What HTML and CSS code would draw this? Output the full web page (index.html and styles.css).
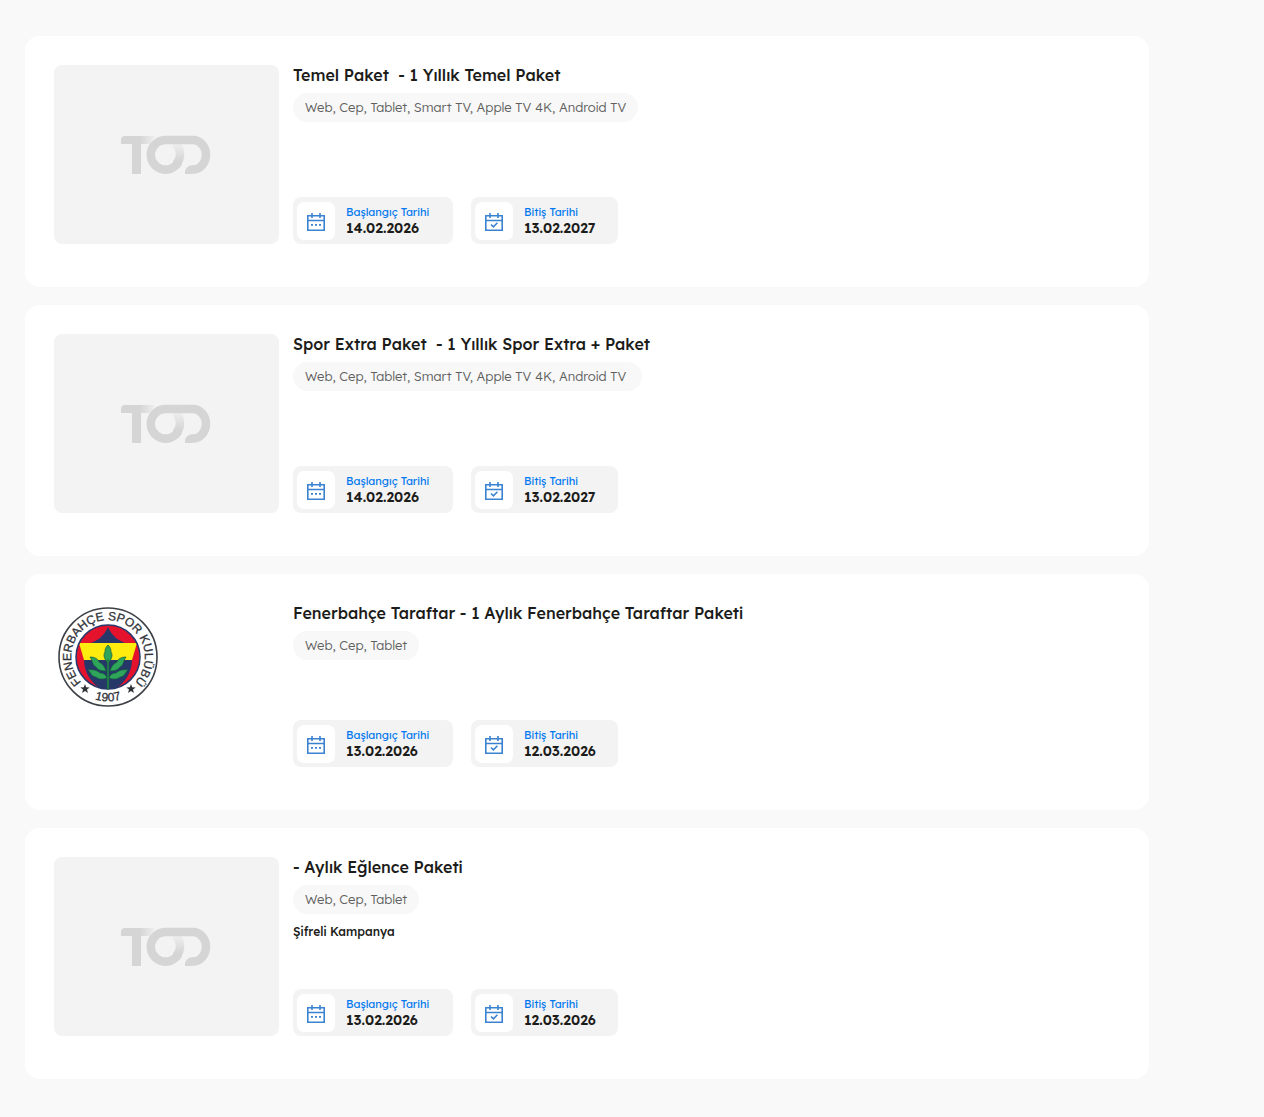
FILE: index.html
```html
<!DOCTYPE html>
<html lang="tr">
<head>
<meta charset="utf-8">
<meta name="viewport" content="width=device-width, initial-scale=1">
<title>Paketlerim</title>
<link rel="stylesheet" href="styles.css">
</head>
<body>
<svg class="sprite" aria-hidden="true">
  <defs>
    <linearGradient id="fade-t" x1="0" x2="1" y1="0" y2="0">
      <stop offset="0" stop-color="#d6d5d5"/><stop offset=".55" stop-color="#d6d5d5"/><stop offset="1" stop-color="#eeeeee"/>
    </linearGradient>
    <linearGradient id="fade-o" gradientUnits="userSpaceOnUse" x1="0" x2="0" y1="8" y2="26">
      <stop offset="0" stop-color="#efefef"/><stop offset="1" stop-color="#d6d5d5"/>
    </linearGradient>
    <symbol id="tod" viewBox="0 0 92 39">
      <path d="M0 9V5a4 4 0 0 1 4-4h30l-5 8z" fill="url(#fade-t)"/>
      <path d="M11 8h9v31h-9z" fill="#d6d5d5"/>
      <path d="M54 8c3.500 3 5 7 5 11.500a15 15 0 0 1-4 10" fill="none" stroke="url(#fade-o)" stroke-width="8.500"/>
      <path d="M71 5H45a14.800 14.800 0 1 0 12.500 22" fill="none" stroke="#d6d5d5" stroke-width="8.500"/>
      <path d="M70 5h2a13 14.800 0 0 1 0 29.600h-1" fill="none" stroke="#d6d5d5" stroke-width="8.500"/>
      <path d="M71.500 30.300V39H64v-1.500a7.200 7.200 0 0 1 7.500-7.200z" fill="#d6d5d5"/>
    </symbol>
    <symbol id="cal-start" viewBox="0 0 20 20">
      <path d="M1.800 4.800h16.400v14.400H1.800zM1.800 9.500h16.400M6 2v5M14 2v5" fill="none" stroke="#3b82d0" stroke-width="1.600"/>
      <path d="M5 13.800h2M9 13.800h2M13 13.800h2" stroke="#3b82d0" stroke-width="1.800"/>
    </symbol>
    <symbol id="cal-end" viewBox="0 0 20 20">
      <path d="M1.800 4.800h16.400v14.400H1.800zM1.800 9.500h16.400M6 2v5M14 2v5M7 13.500l2.400 2.300 4-4" fill="none" stroke="#3b82d0" stroke-width="1.600"/>
    </symbol>
  </defs>
</svg>

<main class="packages">
  <article class="card">
    <div class="thumb"><svg class="tod" role="img" aria-label="TOD"><use href="#tod"/></svg></div>
    <div class="info">
      <h2 class="title">Temel Paket&nbsp; - 1 Yıllık Temel Paket</h2>
      <p class="devices">Web, Cep, Tablet, Smart TV, Apple TV 4K, Android TV</p>
      <dl class="dates">
        <div class="date date-start"><span class="date-icon"><svg><use href="#cal-start"/></svg></span><div><dt>Başlangıç Tarihi</dt><dd>14.02.2026</dd></div></div>
        <div class="date date-end"><span class="date-icon"><svg><use href="#cal-end"/></svg></span><div><dt>Bitiş Tarihi</dt><dd>13.02.2027</dd></div></div>
      </dl>
    </div>
  </article>

  <article class="card">
    <div class="thumb"><svg class="tod" role="img" aria-label="TOD"><use href="#tod"/></svg></div>
    <div class="info">
      <h2 class="title">Spor Extra Paket&nbsp; - 1 Yıllık Spor Extra + Paket</h2>
      <p class="devices">Web, Cep, Tablet, Smart TV, Apple TV 4K, Android TV&nbsp;</p>
      <dl class="dates">
        <div class="date date-start"><span class="date-icon"><svg><use href="#cal-start"/></svg></span><div><dt>Başlangıç Tarihi</dt><dd>14.02.2026</dd></div></div>
        <div class="date date-end"><span class="date-icon"><svg><use href="#cal-end"/></svg></span><div><dt>Bitiş Tarihi</dt><dd>13.02.2027</dd></div></div>
      </dl>
    </div>
  </article>

  <article class="card">
    <div class="club">
      <svg class="crest" viewBox="0 0 108 108" role="img" aria-label="Fenerbahçe Spor Kulübü">
        <defs>
          <clipPath id="disc"><circle cx="54" cy="54" r="32"/></clipPath>
          <path id="arc-top" d="M27.500 79.500A36.800 36.800 0 1 1 80.500 79.500"/>
          <path id="arc-year" d="M32 92.500A44.500 44.500 0 0 0 76 92.500"/>
        </defs>
        <circle cx="54" cy="54" r="49" fill="#fff" stroke="#3c3f45" stroke-width="1.600"/>
        <circle cx="54" cy="54" r="32" fill="#e5122d"/>
        <g clip-path="url(#disc)">
          <path d="M33 41c10-2 17-8 21-17 4 9 11 15 21 17z" fill="#26376a"/>
          <path d="M30 56h48c0 17-10 27-24 34-14-7-24-17-24-34z" fill="#26376a"/>
          <path d="M25 40h58l-5 17H30z" fill="#ffec0f"/>
        </g>
        <circle cx="54" cy="54" r="32" fill="none" stroke="#26376a" stroke-width="1.500"/>
        <g fill="#2fa55c" stroke="#145f38" stroke-width=".7">
          <path d="M54 42c3 3 3 5 3 7 2 3 1 7-3 11-4-4-5-8-3-11 0-2 0-4 3-7z"/>
          <path d="M36 54c5 0 8 2 9 5 4 2 6 5 7 9-5 0-8-1-10-4-4-2-3-6-6-10zM72 54c-5 0-8 2-9 5-4 2-6 5-7 9 5 0 8-1 10-4 4-2 3-6 6-10z"/>
          <path d="M34 67c6-1 10 1 12 3 4 0 6 2 7 5-5 2-9 1-11-1-4 0-5-4-8-7zM74 67c-6-1-10 1-12 3-4 0-6 2-7 5 5 2 9 1 11-1 4 0 5-4 8-7z"/>
          <path d="M53.200 57h1.600v29h-1.600z"/>
        </g>
        <g fill="#303338">
          <path id="star" d="M31 81l1.200 3.300 3.500.1-2.700 2.200.9 3.400-2.900-2-2.900 2 .9-3.400-2.700-2.200 3.500-.1z"/>
          <use href="#star" x="46"/>
        </g>
        <text class="crest-text" text-anchor="middle"><textPath href="#arc-top" startOffset="50%">FENERBAHÇE SPOR KULÜBÜ</textPath></text>
        <text class="crest-text" text-anchor="middle"><textPath href="#arc-year" startOffset="50%">1907</textPath></text>
      </svg>
    </div>
    <div class="info">
      <h2 class="title">Fenerbahçe Taraftar - 1 Aylık Fenerbahçe Taraftar Paketi</h2>
      <p class="devices">Web, Cep, Tablet</p>
      <dl class="dates">
        <div class="date date-start"><span class="date-icon"><svg><use href="#cal-start"/></svg></span><div><dt>Başlangıç Tarihi</dt><dd>13.02.2026</dd></div></div>
        <div class="date date-end"><span class="date-icon"><svg><use href="#cal-end"/></svg></span><div><dt>Bitiş Tarihi</dt><dd>12.03.2026</dd></div></div>
      </dl>
    </div>
  </article>

  <article class="card">
    <div class="thumb"><svg class="tod" role="img" aria-label="TOD"><use href="#tod"/></svg></div>
    <div class="info">
      <h2 class="title">- Aylık Eğlence Paketi</h2>
      <p class="devices">Web, Cep, Tablet</p>
      <p class="campaign">Şifreli Kampanya</p>
      <dl class="dates">
        <div class="date date-start"><span class="date-icon"><svg><use href="#cal-start"/></svg></span><div><dt>Başlangıç Tarihi</dt><dd>13.02.2026</dd></div></div>
        <div class="date date-end"><span class="date-icon"><svg><use href="#cal-end"/></svg></span><div><dt>Bitiş Tarihi</dt><dd>12.03.2026</dd></div></div>
      </dl>
    </div>
  </article>
</main>
</body>
</html>
```
FILE: styles.css
```css
* {
  box-sizing: border-box;
}

body {
  margin: 0;
  background: #f9f9f9;
  color: #1c1c1a;
  font-family: Lexend, Inter, "Noto Sans", sans-serif;
}

h2, p, dl, dd {
  margin: 0;
}

.sprite {
  display: block;
  width: 0;
  height: 0;
}

.packages {
  display: flex;
  flex-direction: column;
  gap: 18px;
  padding: 36px 115px 38px 25px;
}

.card {
  display: flex;
  gap: 14px;
  padding: 29px 29px 43px;
  border-radius: 15px;
  background: #fff;
}

.thumb {
  display: flex;
  flex: none;
  align-items: center;
  justify-content: center;
  width: 225px;
  height: 179px;
  border-radius: 8px;
  background: #f3f3f3;
}

.tod {
  width: 92px;
  height: 39px;
}

.club {
  flex: none;
  width: 225px;
}

.crest {
  display: block;
  width: 108px;
  height: 108px;
}

.crest-text {
  fill: #303338;
  stroke: #303338;
  stroke-width: 0.3;
  font: 400 12px "Liberation Sans", Arial, sans-serif;
}

.info {
  display: flex;
  flex: 1;
  flex-direction: column;
  align-items: flex-start;
  min-width: 0;
  min-height: 164px;
}

.title {
  font-size: 16px;
  font-weight: 500;
  line-height: 20px;
}

.devices {
  margin-top: 8px;
  padding: 0 12px;
  border-radius: 15px;
  background: #f8f8f8;
  color: #60605e;
  font-size: 13px;
  font-weight: 300;
  line-height: 29px;
}

.campaign {
  margin-top: 10px;
  font-size: 12px;
  font-weight: 500;
  line-height: 16px;
}

.dates {
  display: flex;
  flex-wrap: wrap;
  gap: 18px;
  margin-top: auto;
}

.date {
  display: flex;
  align-items: center;
  gap: 11px;
  height: 47px;
  padding: 0 4px;
  border-radius: 8px;
  background: #f3f3f3;
}

.date-start {
  min-width: 160px;
}

.date-end {
  min-width: 147px;
}

.date-icon {
  display: flex;
  align-items: center;
  justify-content: center;
  width: 38px;
  height: 38px;
  border-radius: 7px;
  background: #fff;
}

.date-icon svg {
  width: 20px;
  height: 20px;
}

.date dt {
  color: #0078f0;
  font-size: 11px;
  font-weight: 400;
  line-height: 15px;
}

.date dd {
  font-size: 14px;
  font-weight: 600;
  line-height: 17px;
}
```
